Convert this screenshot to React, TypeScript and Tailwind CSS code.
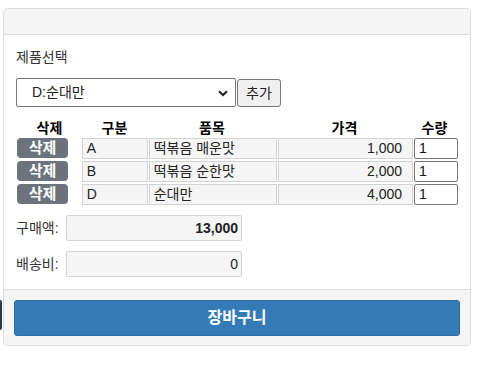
import React from "react";

const font = { fontFamily: '"Liberation Sans", "Noto Sans CJK KR", sans-serif' };

const rows = [
  { code: "A", name: "떡볶음 매운맛", price: "1,000" },
  { code: "B", name: "떡볶음 순한맛", price: "2,000" },
  { code: "D", name: "순대만", price: "4,000" },
];

export default function App() {
  return (
    <div className="relative w-[480px] h-[375px] bg-white text-[14px] text-[#333]" style={font}>
      <div className="absolute left-0 top-[300px] w-[2px] h-[30px] rounded-r bg-[#2a3a55]" />
      <div className="pt-[8px] pl-[3px]">
        <div className="w-[468px] border border-[#ddd] rounded-[4px] overflow-hidden">
          <div className="h-[26px] bg-[#f5f5f5] border-b border-[#ddd]" />
          <div className="px-[12px] pt-[12px] pb-[12px] bg-white">
            <div className="h-[20px] leading-[20px] text-[#333]">제품선택</div>
            <div className="flex mt-[11px] h-[29px]">
              <div className="relative w-[220px] h-[29px] border border-[#767676] rounded-[2px] bg-white flex items-center pl-[15px]">
                <span className="text-[#222]">D:순대만</span>
                <svg className="absolute right-[7px] top-[11px]" width="10" height="7" viewBox="0 0 10 7">
                  <path d="M1 1.2 L5 5 L9 1.2" fill="none" stroke="#222" strokeWidth="2" />
                </svg>
              </div>
              <div className="ml-[1px] mt-[1px] w-[44px] h-[28px] border border-[#767676] rounded-[3px] bg-[#efefef] flex items-center justify-center text-[#222]">
                추가
              </div>
            </div>
            <div className="flex mt-[11px] h-[19px] items-end font-bold text-black leading-[18px]">
              <div className="w-[65px] ml-[1px] text-center">삭제</div>
              <div className="w-[65px] text-center">구분</div>
              <div className="w-[130px] text-center">품목</div>
              <div className="w-[135px] text-center">가격</div>
              <div className="w-[45px] text-center">수량</div>
            </div>
            <div className="flex flex-col gap-[2px] mt-[1px]">
              {rows.map((r) => (
                <div key={r.code} className="flex h-[21px]">
                  <div className="w-[65px] ml-[1px]">
                    <div className="w-[51px] h-[20px] rounded-[4px] bg-[#6c737c] text-white font-bold text-[15px] leading-[20px] text-center">
                      삭제
                    </div>
                  </div>
                  <div className="w-[66px] h-[21px] border border-[#d3d3d3] bg-[#f5f5f5] pl-[4px] leading-[19px] text-[#222]">
                    {r.code}
                  </div>
                  <div className="ml-[1px] w-[129px] h-[21px] border border-[#d3d3d3] bg-[#f5f5f5] pl-[4px] leading-[19px] text-[#222]">
                    {r.name}
                  </div>
                  <div className="ml-[1px] w-[135px] h-[21px] border border-[#d3d3d3] bg-[#f5f5f5] pr-[10px] text-right leading-[19px] text-[#222]">
                    {r.price}
                  </div>
                  <div className="ml-[1px] w-[44px] h-[21px] border border-[#767676] rounded-[2px] bg-white pl-[4px] leading-[19px] text-[#111]">
                    1
                  </div>
                </div>
              ))}
            </div>
            <div className="flex items-center mt-[10px] h-[26px]">
              <div className="w-[50px]">구매액:</div>
              <div className="w-[176px] h-[26px] border border-[#d3d3d3] rounded-[2px] bg-[#f5f5f5] pr-[3px] text-right leading-[24px] font-bold text-[#222]">
                13,000
              </div>
            </div>
            <div className="flex items-center mt-[10px] h-[26px]">
              <div className="w-[50px]">배송비:</div>
              <div className="w-[176px] h-[26px] border border-[#d3d3d3] rounded-[2px] bg-[#f5f5f5] pr-[3px] text-right leading-[24px] text-[#222]">
                0
              </div>
            </div>
          </div>
          <div className="bg-[#f5f5f5] border-t border-[#ddd] px-[10px] pt-[10px] pb-[9px]">
            <div className="h-[36px] rounded-[3px] bg-[#337ab7] border border-[#2e6da4] text-white font-bold text-[16px] flex items-center justify-center">
              장바구니
            </div>
          </div>
        </div>
      </div>
    </div>
  );
}
